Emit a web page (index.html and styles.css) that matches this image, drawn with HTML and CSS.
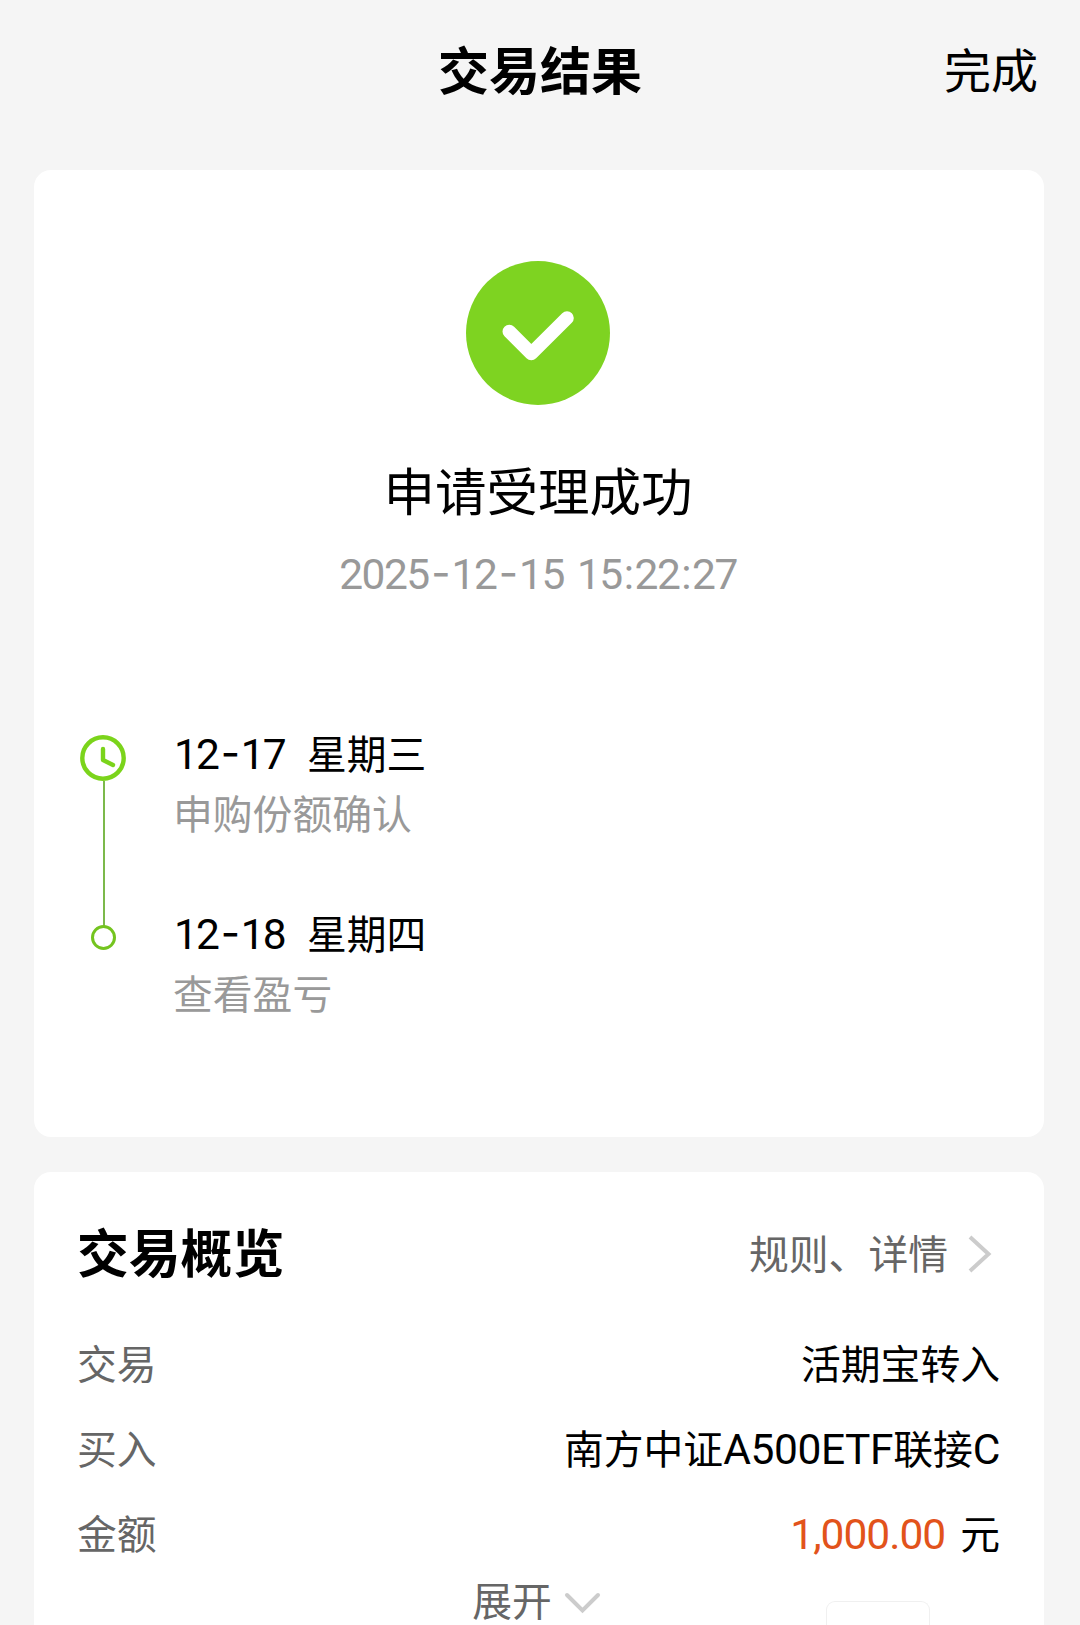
FILE: index.html
```html
<!DOCTYPE html>
<html lang="zh-CN">
<head>
<meta charset="utf-8">
<title>交易结果</title>
<link rel="stylesheet" href="styles.css">
</head>
<body>
<header class="header">
  <span></span>
  <h1 class="title">交易结果</h1>
  <a class="done">完成</a>
</header>
<main class="content">
  <section class="card result">
    <svg class="success" width="144" height="144" viewBox="0 0 144 144">
      <circle cx="72" cy="72" r="72" fill="#7ed321"/>
      <path d="M43.3 70.5 65.3 92.5 101 57" fill="none" stroke="#fff" stroke-width="13.6" stroke-linecap="round" stroke-linejoin="round"/>
    </svg>
    <h2 class="status">申请受理成功</h2>
    <p class="time latin">2025<i class="dash">-</i>12<i class="dash">-</i>15 15<i class="colon">:</i>22<i class="colon">:</i>27</p>
    <ol class="timeline">
      <li class="step">
        <div class="rail">
          <svg class="clock" width="46" height="46" viewBox="0 0 46 46" fill="none" stroke="#7bd41b" stroke-width="4.4">
            <circle cx="23" cy="23" r="20.7"/>
            <path d="M23 14V25L33 30" stroke-linecap="round" stroke-linejoin="round"/>
          </svg>
          <span class="line"></span>
        </div>
        <div class="info">
          <p class="day"><span class="latin date">12<i class="dash">-</i>17</span>星期三</p>
          <p class="desc">申购份额确认</p>
        </div>
      </li>
      <li class="step">
        <div class="rail"><span class="dot"></span></div>
        <div class="info">
          <p class="day"><span class="latin date">12<i class="dash">-</i>18</span>星期四</p>
          <p class="desc last">查看盈亏</p>
        </div>
      </li>
    </ol>
  </section>
  <section class="card overview">
    <div class="overview-head">
      <h2 class="heading">交易概览</h2>
      <a class="rules">规则、详情
        <svg width="24" height="38" viewBox="0 0 24 38" fill="none" stroke="#ccc" stroke-width="4"><path d="M2 2 20.500 19 2 36"/></svg>
      </a>
    </div>
    <dl class="rows">
      <div class="row"><dt>交易</dt><dd>活期宝转入</dd></div>
      <div class="row"><dt>买入</dt><dd>南方中证<span class="latin name">A500ETF</span>联接<span class="latin name">C</span></dd></div>
      <div class="row"><dt>金额</dt><dd><span class="latin amount">1,000.00</span>元</dd></div>
    </dl>
    <div class="expand">展开
      <svg width="37" height="22" viewBox="0 0 37 22" fill="none" stroke="#ccc" stroke-width="4" stroke-linecap="round"><path d="M3 3 18.500 18.500 34 3"/></svg>
    </div>
    <div class="ghost"></div>
  </section>
</main>
</body>
</html>
```
FILE: styles.css
```css
* { box-sizing: border-box; margin: 0; padding: 0; }
body {
  height: 1625px;
  overflow: hidden;
  display: flex;
  flex-direction: column;
  background: #f5f5f5;
  color: #000;
  font-family: "Noto Sans CJK SC", sans-serif;
  font-size: 39.8px;
}
.header {
  display: grid;
  grid-template-columns: 1fr auto 1fr;
  align-items: center;
  height: 134px;
  padding: 2px 42px 0;
  flex: none;
}
.title { font-size: 51px; font-weight: 700; line-height: 60px; }
.done { justify-self: end; font-size: 47px; line-height: 60px; }
.content {
  flex: 1;
  display: flex;
  flex-direction: column;
  gap: 35px;
  padding: 36px 36px 0 34px;
}
.card { background: #fff; border-radius: 17px; flex: none; }
.latin { font-family: Roboto, "Noto Sans CJK SC", sans-serif; font-size: 42.500px; line-height: 1; }
.dash {
  display: inline-block;
  font-family: Inter, sans-serif;
  font-style: normal;
  font-size: 42px;
  line-height: 1;
  vertical-align: 1px;
  margin: 0 2.500px;
}
.colon { font-style: normal; margin: 0 2px; }

.result {
  height: 967px;
  padding: 91px 2px 0 0;
  display: flex;
  flex-direction: column;
  align-items: center;
}
.success { display: block; }
.status { margin-top: 49px; font-size: 51.500px; font-weight: 400; line-height: 70px; }
.time { margin-top: 26px; height: 50px; line-height: 50px; color: #999; letter-spacing: -1.5px; word-spacing: 4px; white-space: nowrap; }
.timeline { align-self: stretch; list-style: none; margin-top: 135px; padding-left: 46px; }
.step { display: flex; gap: 47px; height: 180px; }
.rail { width: 47px; display: flex; flex-direction: column; align-items: center; }
.clock { flex: none; margin-right: 1px; }
.line { flex: none; width: 2px; height: 145px; background: #7cb94b; }
.dot { width: 25px; height: 25px; margin-top: 10px; border: 3px solid #74c41f; border-radius: 50%; }
.day { height: 60px; line-height: 60px; margin-top: -13px; white-space: nowrap; }
.date { display: inline-block; width: 133px; letter-spacing: -1.8px; }
.desc { line-height: 60px; color: #999; margin-left: -1px; }

.overview {
  flex: 1;
  padding: 0 44px 0 43px;
  display: flex;
  flex-direction: column;
  position: relative;
  border-radius: 17px 17px 0 0;
}
.overview-head { display: flex; justify-content: space-between; align-items: center; height: 148px; padding: 10px 8px 0 0; }
.heading { font-size: 51.800px; font-weight: 700; line-height: 70px; }
.rules { display: flex; align-items: center; gap: 20px; color: #666; line-height: 60px; padding-top: 1px; }
.rules svg { margin-top: 4px; }
.row { display: flex; justify-content: space-between; height: 85px; line-height: 84px; }
.row dt { color: #666; }
.name { letter-spacing: -0.4px; }
.amount { color: #e2531b; margin-right: 15px; letter-spacing: -1px; }
.expand { display: flex; justify-content: center; align-items: center; gap: 12px; height: 48px; line-height: 48px; padding-right: 4px; color: #666; }
.expand svg { margin-top: 8px; }
.ghost {
  position: absolute;
  left: 792px;
  top: 429px;
  width: 104px;
  height: 40px;
  border: 1px solid #f0f0f0;
  border-bottom: 0;
  border-radius: 9px 9px 0 0;
}
```
